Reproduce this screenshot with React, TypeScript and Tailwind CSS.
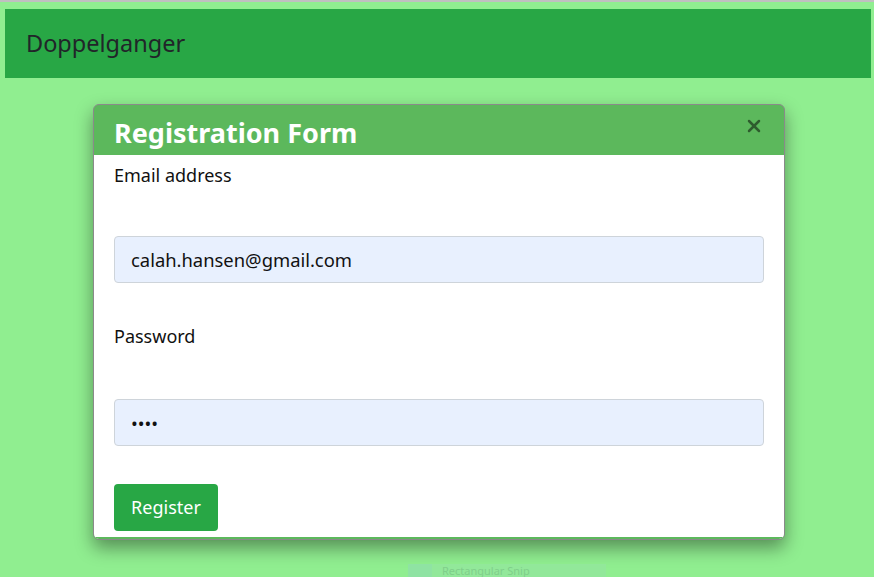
import { X } from "lucide-react";

export default function App() {
  return (
    <div
      className="min-h-[577px] bg-[#90ee90] border-t-2 border-[#c0c0c0] overflow-hidden"
      style={{ fontFamily: '"Noto Sans", "Open Sans", sans-serif' }}
    >
      <nav className="ml-[5px] mr-[3px] mt-[7px] h-[69px] bg-[#28a745] flex items-center px-[21px]">
        <span className="text-[23.5px] text-[#212529]">Doppelganger</span>
      </nav>

      <div className="ml-[93px] mt-[26px] w-[692px] rounded-md border border-[#8a8a8a] bg-[#5cb85c] shadow-[0_8px_18px_rgba(0,0,0,0.4)] overflow-hidden">
        <div className="h-[50px] flex items-center justify-between pl-[20px] pr-[20px]">
          <h2 className="text-[27px] font-bold text-white leading-none mt-[4px]">
            Registration Form
          </h2>
          <button type="button" className="text-[#2e5c2e] -mt-[8px]">
            <X size={20} strokeWidth={3} />
          </button>
        </div>

        <form className="bg-white pt-[7px] px-[20px] pb-[6px] border-b-[2px] border-[#5cb85c]">
          <label className="block h-[27px] text-[18px] leading-[27px] text-[#111]">
            Email address
          </label>
          <input
            type="email"
            defaultValue="calah.hansen@gmail.com"
            className="mt-[47px] block w-full h-[47px] rounded border border-[#ced4da] bg-[#e8f0fe] px-[16px] text-[18.4px] text-[#111] outline-none"
          />

          <label className="mt-[40px] block h-[27px] text-[18px] leading-[27px] text-[#111]">
            Password
          </label>
          <input
            type="password"
            defaultValue="abcd"
            className="mt-[49px] block w-full h-[47px] rounded border border-[#ced4da] bg-[#e8f0fe] px-[16px] text-[18px] text-[#111] outline-none"
          />

          <button
            type="button"
            className="mt-[38px] block h-[47px] w-[104px] rounded bg-[#28a745] text-[18px] text-white"
          >
            Register
          </button>
        </form>
      </div>

      <div className="ml-[408px] mt-[24px] w-[198px] h-[14px] bg-[#92e89a] flex items-start">
        <div className="w-[24px] h-full bg-[#8fe3a3]" />
        <span className="ml-[10px] text-[11px] leading-[14px] text-[#80cf8a]">
          Rectangular Snip
        </span>
      </div>
    </div>
  );
}
